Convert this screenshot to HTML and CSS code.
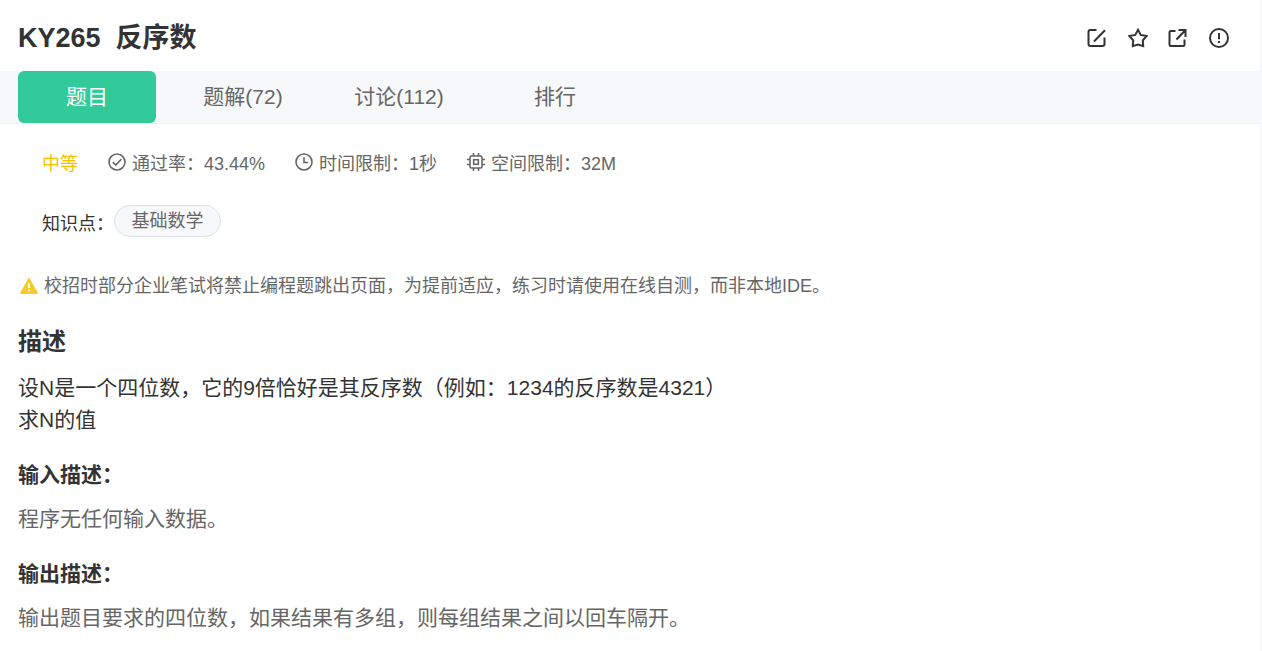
FILE: index.html
```html
<!DOCTYPE html>
<html lang="zh-CN">
<head>
  <meta charset="UTF-8">
  <title>KY265 反序数</title>
  <link rel="stylesheet" href="styles.css">
</head>
<body>
  <div class="page">
    <header class="header">
      <h1 class="title"><span>KY265</span><span>反序数</span></h1>
      <div class="actions">
        <svg class="icon-action" viewBox="0 0 20 20">
          <path d="M9.5 2H3.5Q1.5 2 1.5 4V16Q1.5 18 3.5 18H15.5Q17.5 18 17.5 16V9.5M7 13.5L18 2.3"/>
        </svg>
        <svg class="icon-action" viewBox="0 0 20 20">
          <path d="M10 1.8L12.7 6.9L18.6 8L14.8 12.4L15.2 18.2L10 16.6L4.8 18.2L5.2 12.4L1.4 8L7.3 6.9Z"/>
        </svg>
        <svg class="icon-action" viewBox="0 0 20 20">
          <path d="M7.5 3H2.8Q1.5 3 1.5 4.3V16.7Q1.5 18 2.8 18H15.2Q16.5 18 16.5 16.7V11.5M10.5 2H17.5V9M17.5 2L8.5 11.5"/>
        </svg>
        <svg class="icon-action" viewBox="0 0 20 20">
          <circle cx="10" cy="10" r="9"/>
          <path d="M10 5V11.2M10 13V15"/>
        </svg>
      </div>
    </header>

    <nav class="tabs">
      <a class="tab tab-active">题目</a>
      <a class="tab">题解(72)</a>
      <a class="tab">讨论(112)</a>
      <a class="tab">排行</a>
    </nav>

    <div class="meta">
      <span class="level">中等</span>
      <span class="meta-item">
        <svg class="icon-meta" viewBox="0 0 18 18">
          <circle cx="9" cy="9" r="8"/>
          <path d="M4.8 9.2L7.8 12.1L13.3 6.2"/>
        </svg>
        <span>通过率：43.44%</span>
      </span>
      <span class="meta-item">
        <svg class="icon-meta" viewBox="0 0 18 18">
          <circle cx="9" cy="9" r="8"/>
          <path d="M9 4.3V9.5H13.2"/>
        </svg>
        <span>时间限制：1秒</span>
      </span>
      <span class="meta-item">
        <svg class="icon-meta" viewBox="0 0 18 18">
          <rect x="3" y="3" width="12" height="12" rx="1.5"/>
          <rect x="6.7" y="6.7" width="4.6" height="4.6"/>
          <path d="M6.5 0V3M11.5 0V3M6.5 15V18M11.5 15V18M0 6.5H3M0 11.5H3M15 6.5H18M15 11.5H18"/>
        </svg>
        <span>空间限制：32M</span>
      </span>
    </div>

    <div class="knowledge">
      <span class="knowledge-label">知识点：</span>
      <a class="tag">基础数学</a>
    </div>

    <div class="notice">
      <svg class="icon-warn" viewBox="0 0 18 16">
        <path class="warn-body" d="M8.3 .6Q9 -.4 9.7 .6L17.7 14.6Q18.2 16 17 16H1Q-.2 16 .3 14.6Z"/>
        <path class="warn-mark" d="M9 5.3V10M9 11.6V13.4"/>
      </svg>
      <span>校招时部分企业笔试将禁止编程题跳出页面，为提前适应，练习时请使用在线自测，而非本地IDE。</span>
    </div>

    <main class="content">
      <h2 class="section-title">描述</h2>
      <p class="desc">设N是一个四位数，它的9倍恰好是其反序数（例如：1234的反序数是4321）<br>求N的值</p>
      <h3 class="sub-title">输入描述：</h3>
      <p class="text">程序无任何输入数据。</p>
      <h3 class="sub-title">输出描述：</h3>
      <p class="text">输出题目要求的四位数，如果结果有多组，则每组结果之间以回车隔开。</p>
    </main>
  </div>
</body>
</html>
```

FILE: styles.css
```css
body{
  margin: 0;
  background: #f7f8fa;
  color: #333;
  font-family: "Liberation Sans", "Noto Sans CJK SC", sans-serif;
  font-size: 21px;
}
h1,h2,h3,p{
  margin: 0;
}
svg{
  display: block;
  flex: none;
  fill: none;
}
.page{
  box-sizing: border-box;
  width: 1260px;
  height: 651px;
  background: #fff;
  overflow: hidden;
}

/* 标题栏 */
.header{
  display: flex;
  justify-content: space-between;
  box-sizing: border-box;
  height: 71px;
  padding: 18px 31.5px 0 18px;
}
.title{
  display: flex;
  gap: 15px;
  font-size: 27px;
  line-height: 40px;
}
.actions{
  display: flex;
  gap: 20.5px;
  padding-top: 9.5px;
}
.icon-action{
  width: 20px;
  height: 20px;
  stroke: #333;
  stroke-width: 2;
}

/* 选项卡 */
.tabs{
  display: flex;
  gap: 18px;
  box-sizing: border-box;
  height: 53px;
  padding-left: 18px;
  background: #f7f8fa;
  border-bottom: 1px solid #f0f1f3;
}
.tab{
  width: 138px;
  height: 52px;
  line-height: 52px;
  text-align: center;
  color: #666;
}
.tab-active{
  border-radius: 6px;
  background: #32ca99;
  color: #fff;
}

/* 通过率、时间、空间 */
.meta{
  display: flex;
  gap: 30px;
  padding: 27px 0 0 42px;
  font-size: 18px;
  line-height: 27px;
  color: #666;
}
.level{
  color: #f5c000;
}
.meta-item{
  display: flex;
  gap: 6px;
}
.icon-meta{
  width: 18px;
  height: 18px;
  margin-top: 2px;
  stroke: #666;
  stroke-width: 1.6;
}
.knowledge{
  display: flex;
  padding: 27px 0 0 42px;
  font-size: 18px;
}
.knowledge-label{
  width: 72px;
  line-height: 39px;
}
.tag{
  box-sizing: border-box;
  width: 107px;
  height: 32px;
  border: 1px solid #dfe2e5;
  border-radius: 16px;
  background: #f7f8fa;
  line-height: 30px;
  text-align: center;
  color: #666;
}

/* 提示 */
.notice{
  display: flex;
  gap: 6px;
  padding: 29px 0 0 20px;
  font-size: 18px;
  line-height: 27px;
  color: #666;
}
.icon-warn{
  width: 18px;
  height: 16px;
  margin-top: 5px;
}
.warn-body{
  fill: #f5cb2b;
}
.warn-mark{
  stroke: #fff;
  stroke-width: 1.8;
}

/* 题目内容 */
.content{
  padding: 24px 18px 0;
}
.section-title{
  font-size: 24px;
  line-height: 36px;
}
.desc{
  padding-top: 12px;
  line-height: 32px;
}
.sub-title{
  padding-top: 23px;
  font-size: 21px;
  line-height: 32px;
}
.text{
  padding-top: 12px;
  line-height: 32px;
  color: #666;
}
```
